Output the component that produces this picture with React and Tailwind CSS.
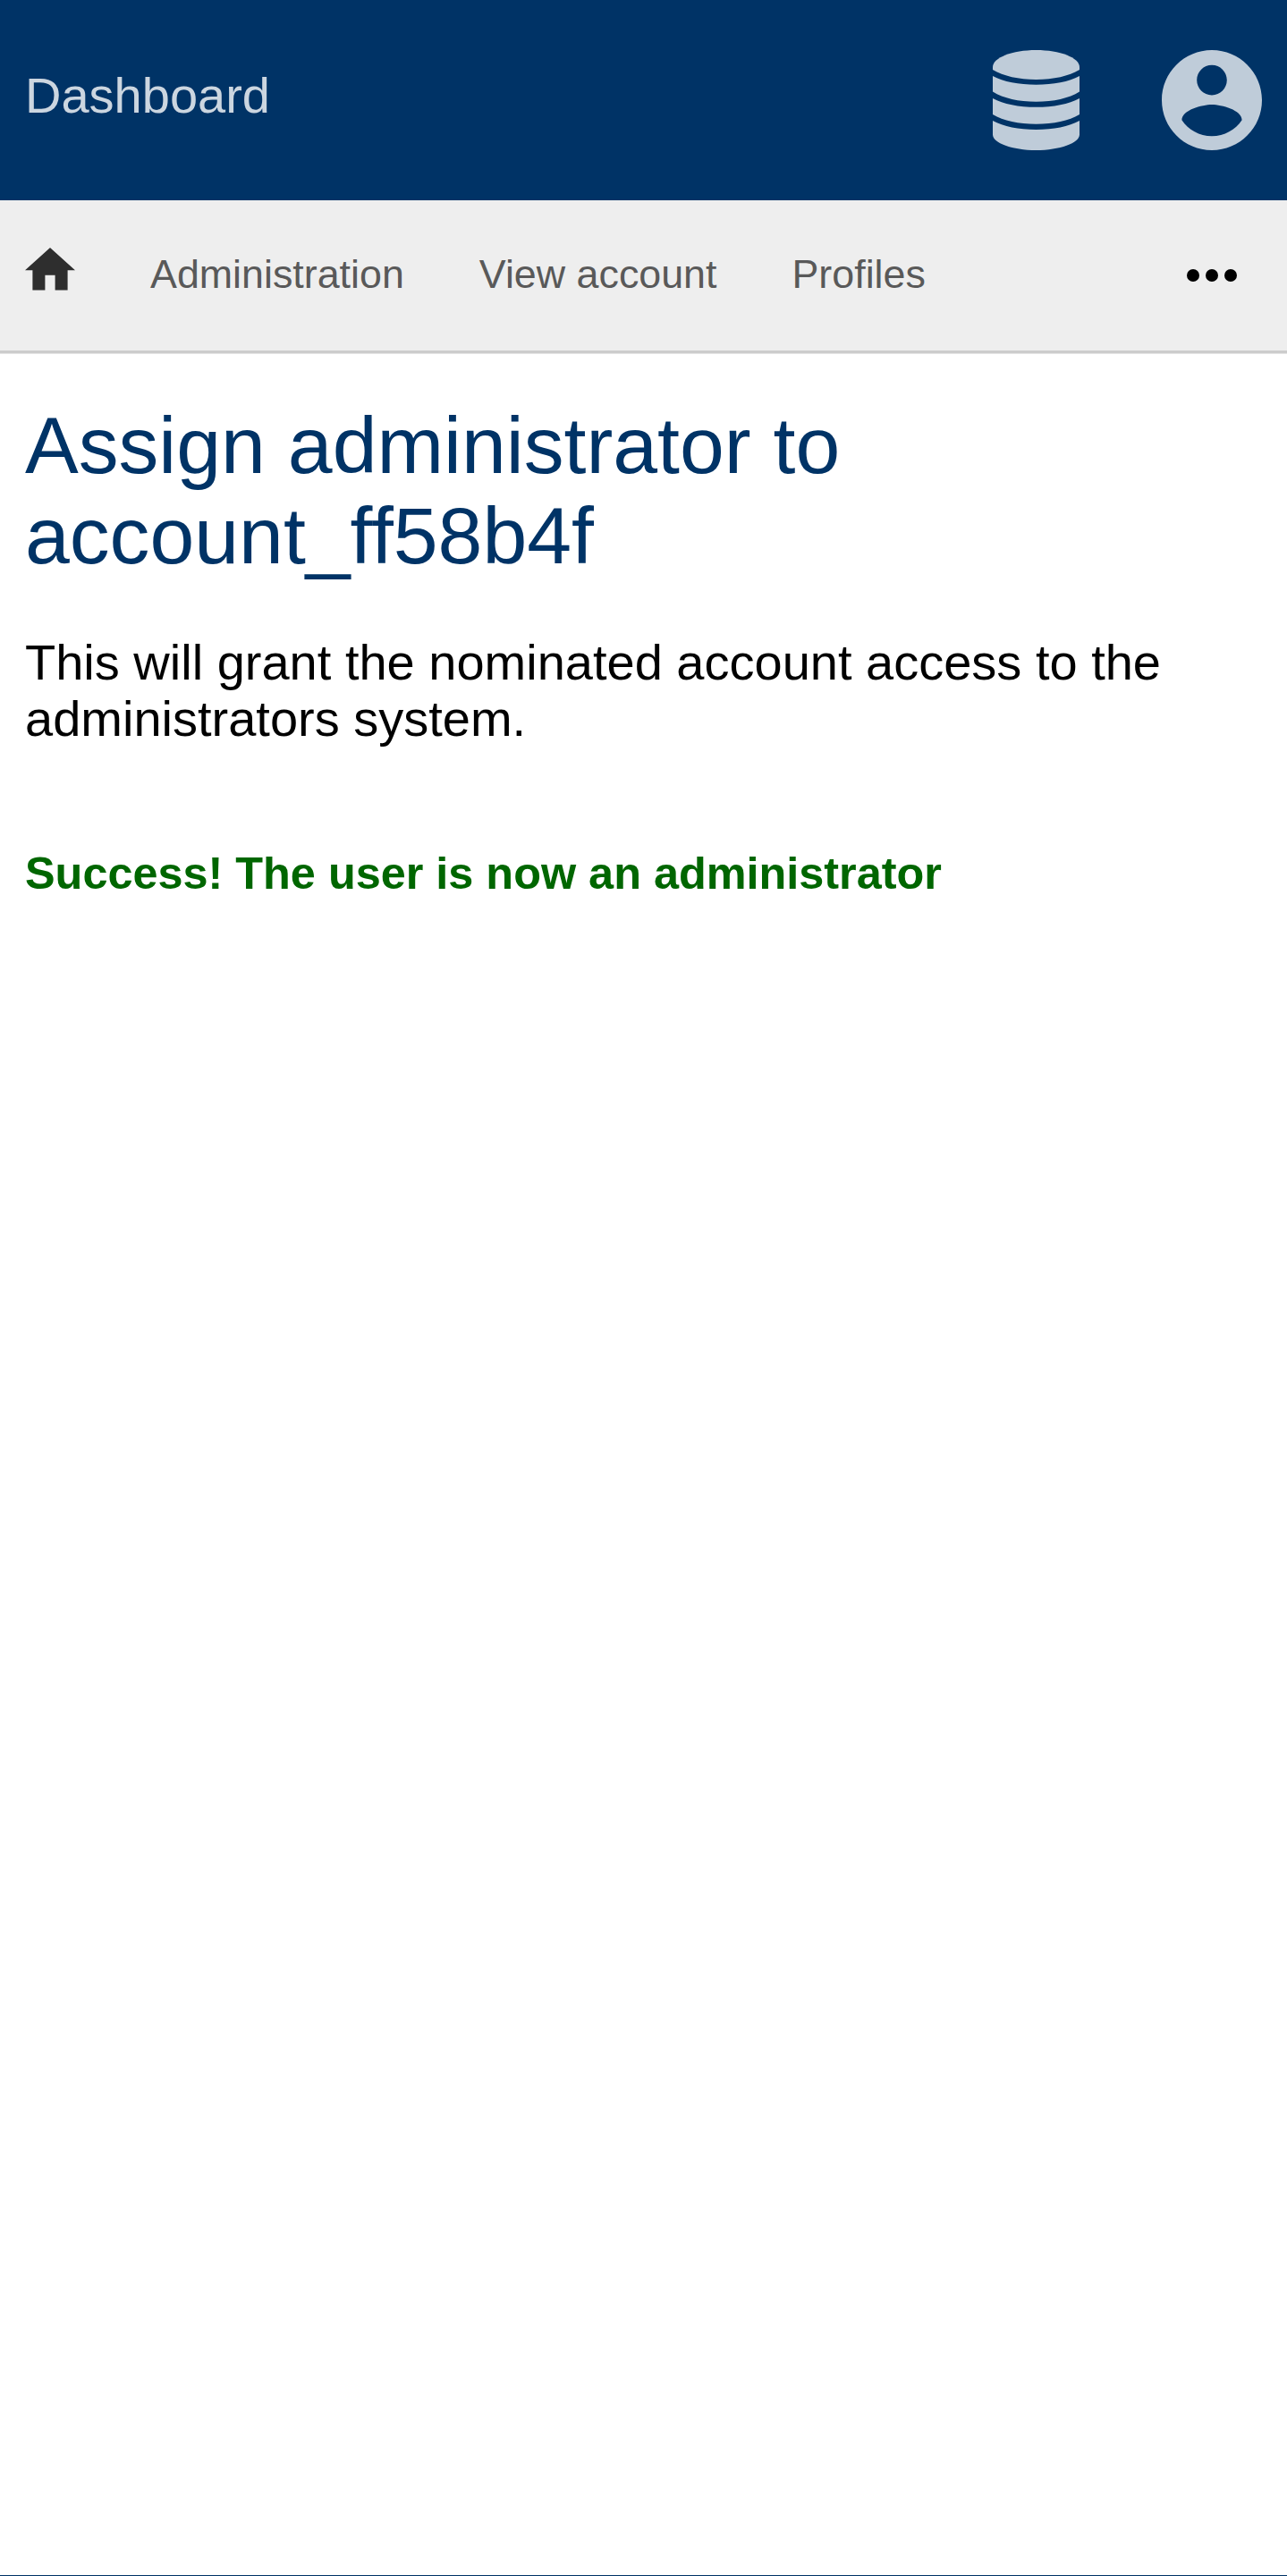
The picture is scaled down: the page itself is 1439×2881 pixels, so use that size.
function DatabaseIcon() {
  return (
    <svg viewBox="0 0 97 112" className="h-28 w-[97px]" fill="currentColor" aria-hidden="true">
      <path d="M48.5 0C75 0 97 8.5 97 19v3C85 29 68 33 48.5 33S12 29 0 22v-3C0 8.500 22 0 48.500 0Z" />
      <path d="M0 29C12 35.500 29 38.700 48.500 38.700S85 35.500 97 29v17.500C85 54 68 57.700 48.500 57.700S12 54 0 46.500Z" />
      <path d="M0 54C12 60.500 29 63.800 48.500 63.800S85 60.500 97 54v18C85 79 68 82.800 48.500 82.800S12 79 0 72Z" />
      <path d="M0 79C12 85.500 29 89 48.500 89S85 85.500 97 79v15.500C97 104 75 112 48.500 112S0 104 0 94.500Z" />
    </svg>
  );
}

function AccountIcon() {
  return (
    <svg viewBox="2 2 20 20" className="size-28" fill="currentColor" aria-hidden="true">
      <path d="M12 2C6.480 2 2 6.480 2 12s4.480 10 10 10 10-4.480 10-10S17.520 2 12 2zm0 3c1.660 0 3 1.340 3 3s-1.340 3-3 3-3-1.340-3-3 1.340-3 3-3zm0 14.200c-2.500 0-4.710-1.280-6-3.220.03-1.990 4-3.080 6-3.080 1.990 0 5.970 1.090 6 3.080-1.290 1.940-3.500 3.220-6 3.220z" />
    </svg>
  );
}

function HomeIcon() {
  return (
    <svg viewBox="2 3 20 17" className="mb-[14px] h-[47.6px] w-14" fill="#2e2e2e" aria-hidden="true">
      <path d="M10 20v-6h4v6h5v-8h3L12 3 2 12h3v8z" />
    </svg>
  );
}

function MoreIcon() {
  return (
    <svg viewBox="0 0 56 14" className="h-[14px] w-14" fill="#000" aria-hidden="true">
      <circle cx="7" cy="7" r="7" />
      <circle cx="28" cy="7" r="7" />
      <circle cx="49" cy="7" r="7" />
    </svg>
  );
}

const links = ["Administration", "View account", "Profiles"];

export default function App() {
  return (
    <div className="flex h-[2881px] flex-col overflow-hidden bg-white font-['Liberation_Sans',Arial,sans-serif] text-[56px] leading-[63px] text-black">
      <header className="flex h-56 shrink-0 items-center justify-between bg-[#003366] pr-[28.5px] pl-7">
        <a className="pb-[11px] text-[#ccd6e0]">Dashboard</a>
        <div className="flex items-center gap-[91.5px] text-[#bfccd9]">
          <DatabaseIcon />
          <AccountIcon />
        </div>
      </header>
      <nav className="flex h-[171px] shrink-0 items-center border-b-[3px] border-[#cccccc] bg-[#eeeeee] pr-[56.5px] pl-7 text-[44.8px] leading-[52px] text-[#595959] shadow-[0_1px_0_#e5e5e5]">
        <HomeIcon />
        <div className="ml-[84px] flex gap-[84px] pb-[5px]">
          {links.map((label) => (
            <a key={label}>{label}</a>
          ))}
        </div>
        <div className="ml-auto">
          <MoreIcon />
        </div>
      </nav>
      <main className="flex-1 px-7">
        <h1 className="mt-[52.5px] text-[89.6px] leading-[101.5px] text-[#003366]">
          Assign administrator to
          <br />
          account_ff58b4f
        </h1>
        <p className="mt-[58.5px]">This will grant the nominated account access to the administrators system.</p>
        <p className="mt-[113px] text-[50.4px] leading-[57px] font-bold text-[#006600]">
          Success! The user is now an administrator
        </p>
      </main>
      <footer className="h-px shrink-0 bg-[#003366]" />
    </div>
  );
}
